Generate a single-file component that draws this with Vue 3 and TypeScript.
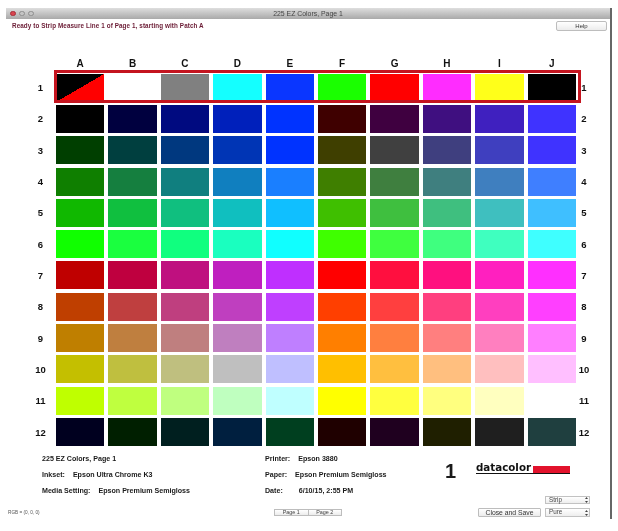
<script setup lang="ts">
const columns: string[] = ['A', 'B', 'C', 'D', 'E', 'F', 'G', 'H', 'I', 'J']
const rows: string[][] = [
  ['split', '#ffffff', '#808080', '#14ffff', '#0a36ff', '#1aff00', '#ff0000', '#ff2cff', '#ffff1a', '#000000'],
  ['#000000', '#00003f', '#000a80', '#0020bb', '#0033ff', '#3f0000', '#3f0040', '#3f0f80', '#3f20bf', '#3f33ff'],
  ['#003f00', '#003f3f', '#00387f', '#0035b5', '#0033ff', '#3f3f00', '#404040', '#3f3f7f', '#3f3fbf', '#3f33ff'],
  ['#0f7f00', '#157f3f', '#107f7f', '#107fbf', '#1a7fff', '#3f7f00', '#3f7f3f', '#3f7f7f', '#3f7fbf', '#3f7fff'],
  ['#10b800', '#10bf3f', '#10bf7f', '#10bfbf', '#10bfff', '#3fbf00', '#3fbf3f', '#3fbf7f', '#3fbfbf', '#3fbfff'],
  ['#10ff00', '#1aff3f', '#10ff7f', '#1affbf', '#10ffff', '#3fff00', '#3fff3f', '#3fff7f', '#3fffbf', '#3fffff'],
  ['#bf0000', '#bf003f', '#bf107f', '#bf1fbf', '#bf2fff', '#ff0000', '#ff0f3f', '#ff107f', '#ff20bf', '#ff2fff'],
  ['#bf3f00', '#bf3f3f', '#bf3f7f', '#bf3fbf', '#bf3fff', '#ff3f00', '#ff3f3f', '#ff3f7f', '#ff3fbf', '#ff3fff'],
  ['#bf7f00', '#bf7f3f', '#bf7f7f', '#bf7fbf', '#bf7fff', '#ff7f00', '#ff7f3f', '#ff7f7f', '#ff7fbf', '#ff7fff'],
  ['#c4bf00', '#bfbf3f', '#bfbf7f', '#bfbfbf', '#bfbfff', '#ffbf00', '#ffbf3f', '#ffbf7f', '#ffbfbf', '#ffbfff'],
  ['#bfff00', '#bfff3f', '#bfff7f', '#bfffbf', '#bfffff', '#ffff00', '#ffff3f', '#ffff7f', '#ffffbf', '#ffffff'],
  ['#00001f', '#001f00', '#001f1f', '#001f3f', '#003f1f', '#1f0000', '#1f001f', '#1f1f00', '#1f1f1f', '#1f3f3f'],
]
</script>

<template>
  <div class="page">
    <div class="window">
      <header class="titlebar">
        <span class="light red"></span>
        <span class="light"></span>
        <span class="light"></span>
        <span class="title">225 EZ Colors, Page 1</span>
      </header>

      <div class="toolbar">
        <span class="status">Ready to Strip Measure Line 1 of Page 1, starting with Patch A</span>
        <button class="btn help">Help</button>
      </div>

      <div class="chart">
        <span></span>
        <span v-for="c in columns" :key="c" class="col-label">{{ c }}</span>
        <span></span>
        <template v-for="(row, r) in rows" :key="r">
          <span class="row-label">{{ r + 1 }}</span>
          <div
            v-for="(color, c) in row"
            :key="c"
            class="patch"
            :class="{ split: color === 'split' }"
            :style="color === 'split' ? undefined : { backgroundColor: color }"
          ></div>
          <span class="row-label">{{ r + 1 }}</span>
        </template>
        <div class="frame"></div>
      </div>

      <div class="info">
        <div class="info-col first">
          <div>225 EZ Colors, Page 1</div>
          <div>Inkset:<span class="v1">Epson Ultra Chrome K3</span></div>
          <div>Media Setting:<span class="v2">Epson Premium Semigloss</span></div>
        </div>
        <div class="info-col second">
          <div>Printer:<span class="v3">Epson 3880</span></div>
          <div>Paper:<span class="v4">Epson Premium Semigloss</span></div>
          <div>Date:<span class="v5">6/10/15, 2:55 PM</span></div>
        </div>
        <div class="brand">
          <div class="brand-row">
            <span class="big">1</span>
            <div class="logo">
              <span class="logo-text">datacolor</span>
              <span class="logo-bar"></span>
            </div>
          </div>
          <div class="select strip">
            Strip
            <svg class="arrows" viewBox="0 0 3 6" width="3" height="6"><path d="M1.5 0 3 2H0zM1.5 6 0 4h3z" fill="#444" /></svg>
          </div>
        </div>
      </div>

      <div class="bottom">
        <span class="rgb">RGB = (0, 0, 0)</span>
        <div class="pages">
          <button class="tab">Page 1</button>
          <button class="tab">Page 2</button>
        </div>
        <button class="btn close">Close and Save</button>
        <div class="select pure">
          Pure
          <svg class="arrows" viewBox="0 0 3 6" width="3" height="6"><path d="M1.5 0 3 2H0zM1.5 6 0 4h3z" fill="#444" /></svg>
        </div>
      </div>
    </div>
  </div>
</template>

<style>
html, body { margin: 0; background: #fff; }
</style>

<style scoped>
.page {
  width: 618px;
  height: 531px;
  box-sizing: border-box;
  padding-top: 8px;
  background: #fff;
  overflow: hidden;
  font-family: "Liberation Sans", Arial, sans-serif;
  color: #111;
  filter: blur(0.3px);
}
.window {
  width: 606px;
  height: 511px;
  margin-left: 6px;
  box-sizing: border-box;
  border-right: 2px solid #666;
}
.titlebar {
  height: 11px;
  display: flex;
  align-items: center;
  gap: 3.5px;
  padding-left: 4px;
  background: linear-gradient(#dedede, #a9a9a9);
  position: relative;
}
.light {
  width: 5.5px;
  height: 5.5px;
  border-radius: 50%;
  background: #c4c4c4;
  border: 0.5px solid #8e8e8e;
  box-sizing: border-box;
}
.light.red {
  background: #d9434e;
  border-color: #a5303a;
}
.title {
  position: absolute;
  left: 0;
  right: 0;
  text-align: center;
  font-size: 6.9px;
  color: #444;
}
.toolbar {
  height: 14px;
  display: flex;
  align-items: flex-start;
  justify-content: space-between;
  padding: 1.5px 3px 0 6px;
  box-sizing: border-box;
}
.status {
  font-size: 6.3px;
  font-weight: 700;
  color: #6a1a33;
  line-height: 10px;
  letter-spacing: 0.1px;
}
.btn {
  padding: 0;
  margin: 0;
  background: linear-gradient(#fff, #ececec);
  border: 1px solid #bdbdbd;
  border-radius: 2px;
  font-family: inherit;
  color: #333;
}
.help {
  width: 51px;
  height: 10.5px;
  font-size: 6px;
  line-height: 8px;
}
.chart {
  display: grid;
  grid-template-columns: 23px repeat(10, 48.4px) 8px;
  grid-template-rows: 12px;
  grid-auto-rows: 28px;
  column-gap: 4px;
  row-gap: 3.33px;
  margin-left: 23px;
  margin-top: 25.2px;
  position: relative;
}
.col-label {
  text-align: center;
  font-size: 10px;
  font-weight: 700;
  line-height: 12px;
  color: #111;
}
.row-label {
  display: flex;
  align-items: center;
  justify-content: center;
  font-size: 9.5px;
  font-weight: 700;
  white-space: nowrap;
}
.split {
  background: linear-gradient(to bottom right, #000 50%, #f00 50%);
}
.frame {
  position: absolute;
  left: 24.5px;
  top: 11.8px;
  width: 527px;
  height: 33px;
  border: 3px solid #c4141f;
  box-sizing: border-box;
}
.info {
  display: flex;
  margin-top: 6px;
  height: 53px;
  font-size: 7.1px;
  font-weight: 700;
  line-height: 15.7px;
  color: #1a1a1a;
}
.info-col.first {
  margin-left: 36px;
  width: 223px;
  flex: none;
}
.info-col.second {
  width: 181px;
  flex: none;
}
.v1, .v2, .v3, .v4 { margin-left: 8px; }
.v5 { margin-left: 16px; }
.brand {
  display: flex;
  flex-direction: column;
}
.brand-row {
  display: flex;
  align-items: flex-start;
  height: 43.5px;
}
.big {
  font-size: 20px;
  font-weight: 700;
  line-height: 22px;
  margin-top: 8px;
  margin-left: -1px;
  width: 31px;
}
.logo {
  display: flex;
  align-items: flex-end;
  margin-top: 9px;
  border-bottom: 1px solid #111;
  height: 12px;
  width: 94px;
}
.logo-text {
  font-family: "DejaVu Sans", sans-serif;
  font-size: 10.3px;
  font-weight: 700;
  line-height: 12px;
  color: #111;
}
.logo-bar {
  flex: 1;
  height: 6.5px;
  margin-left: 2px;
  margin-bottom: 0.5px;
  background: #e2122c;
}
.select {
  width: 45px;
  height: 8.5px;
  box-sizing: border-box;
  border: 1px solid #c2c2c2;
  background: linear-gradient(#fff, #eee);
  font-size: 6.3px;
  font-weight: 400;
  line-height: 6.5px;
  color: #444;
  padding-left: 3px;
  display: flex;
  justify-content: space-between;
  align-items: center;
}
.arrows {
  margin-right: 1.5px;
  flex: none;
}
.strip {
  margin-left: 99px;
}
.bottom {
  display: flex;
  align-items: center;
  margin-top: 3px;
  height: 9px;
}
.rgb {
  font-size: 4.7px;
  color: #555;
  margin-left: 2px;
  width: 266px;
  flex: none;
}
.pages {
  display: flex;
  width: 68px;
  flex: none;
}
.tab {
  flex: 1;
  height: 7.5px;
  padding: 0;
  margin: 0;
  background: linear-gradient(#fff, #ececec);
  border: 1px solid #bdbdbd;
  font-family: inherit;
  font-size: 5.4px;
  line-height: 5px;
  color: #444;
}
.tab + .tab { border-left: none; }
.close {
  margin-left: 136px;
  width: 63px;
  height: 8.5px;
  font-size: 6.8px;
  line-height: 6px;
  border-radius: 1px;
}
.pure {
  margin-left: 4px;
}
</style>
